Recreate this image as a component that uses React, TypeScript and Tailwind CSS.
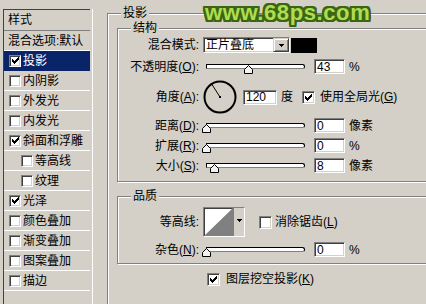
import clsx from "clsx";

// classic win9x bevels
const sunken =
  "border border-t-[#808080] border-l-[#808080] border-b-white border-r-white shadow-[inset_1px_1px_0_#404040,inset_-1px_-1px_0_#d4d0c8]";
const raised =
  "border border-t-[#d4d0c8] border-l-[#d4d0c8] border-b-[#404040] border-r-[#404040] shadow-[inset_1px_1px_0_#fff,inset_-1px_-1px_0_#808080]";
const etched = "border border-[#808080] shadow-[inset_1px_1px_0_#fff,1px_1px_0_#fff]";

const checkPixels = [
  [6, 0, 1],
  [5, 1, 2],
  [0, 2, 1],
  [4, 2, 3],
  [0, 3, 2],
  [3, 3, 3],
  [0, 4, 5],
  [1, 5, 3],
  [2, 6, 1],
];

function CheckMark() {
  return (
    <svg width="7" height="7" viewBox="0 0 7 7" shapeRendering="crispEdges">
      {checkPixels.map(([x, y, w]) => (
        <rect key={`${x}-${y}`} x={x} y={y} width={w} height={1} fill="#000" />
      ))}
    </svg>
  );
}

function Box({ checked, small, className }: { checked?: boolean; small?: boolean; className?: string }) {
  return (
    <span
      className={clsx(
        "flex shrink-0 items-center justify-center bg-white",
        sunken,
        small ? "h-[12px] w-[12px]" : "h-[13px] w-[13px]",
        className
      )}
    >
      {checked && <CheckMark />}
    </span>
  );
}

function Field({ value, className }: { value: string; className?: string }) {
  return (
    <div className={clsx(sunken, "flex h-[15px] shrink-0 items-center bg-white pl-[2px]", className)}>
      {value}
    </div>
  );
}

function Slider({ thumb }: { thumb: string }) {
  return (
    <div className="relative h-[15px] w-[104px] shrink-0">
      <div className="absolute left-[3px] top-[5px] h-[5px] w-[99px] rounded-r-[3px] border border-black border-b-[#808080] bg-white" />
      <svg className={clsx("absolute top-[6px]", thumb)} width="9" height="9" viewBox="0 0 9 9">
        <path d="M0.5 8.5V4.5L4.5 0.5L8.5 4.5V8.5Z" fill="#f2f2f2" stroke="#000" />
      </svg>
    </div>
  );
}

function Arrow() {
  return (
    <svg width="5" height="3" viewBox="0 0 5 3" shapeRendering="crispEdges">
      <path d="M0 0H5L2.5 3Z" fill="#000" />
    </svg>
  );
}

function Row({ label, className, children }: { label: React.ReactNode; className?: string; children: React.ReactNode }) {
  return (
    <div className={clsx("flex items-center", className)}>
      <div className="w-[81px] shrink-0 text-right">{label}</div>
      <div className="ml-[4px] flex items-center">{children}</div>
    </div>
  );
}

function Dial() {
  return (
    <svg width="34" height="34" viewBox="0 0 34 34" className="shrink-0">
      <circle cx="17" cy="17" r="15.5" fill="none" stroke="#000" strokeWidth="2" />
      <line x1="17" y1="17" x2="8" y2="3" stroke="#000" strokeWidth="1" />
      <rect x="16" y="16" width="2" height="2" fill="#000" />
    </svg>
  );
}

const styles = [
  { label: "投影", checked: true, selected: true },
  { label: "内阴影" },
  { label: "外发光" },
  { label: "内发光" },
  { label: "斜面和浮雕", checked: true },
  { label: "等高线", sub: true },
  { label: "纹理", sub: true },
  { label: "光泽", checked: true },
  { label: "颜色叠加" },
  { label: "渐变叠加" },
  { label: "图案叠加" },
  { label: "描边" },
];

function StyleList() {
  return (
    <div className="mt-[9px] flex h-[300px] w-[87px] shrink-0 flex-col border-l border-t border-[#404040] border-r-black">
      <div className="flex h-[21px] items-center border-b border-[#808080] pl-[4px]">样式</div>
      <div className="flex h-[20px] items-center border-b border-white pl-[4px]">混合选项:默认</div>
      {styles.map((s) => (
        <div
          key={s.label}
          className={clsx(
            "flex h-[20px] items-center border-b",
            s.selected ? "border-[#0a246a] bg-[#0a246a] text-white" : "border-white",
            s.sub ? "pl-[17px]" : "pl-[5px]"
          )}
        >
          <Box small checked={s.checked} />
          <span className="ml-[2px]">{s.label}</span>
        </div>
      ))}
    </div>
  );
}

export default function App() {
  return (
    <div className="relative flex h-[304px] w-[426px] items-start overflow-hidden bg-[#d4d0c8] pl-[3px] font-['Liberation_Sans','Noto_Sans_CJK_SC',sans-serif] text-[12px] leading-[14px] text-black">
      <StyleList />
      <div className="ml-[2px] mt-[9px] h-[295px] w-px shrink-0 bg-white" />

      <fieldset className={clsx(etched, "ml-[14px] mt-[6px] min-h-[320px] w-[340px] shrink-0")}>
        <legend className="ml-[13px] bg-[#d4d0c8] px-[2px]">投影</legend>

        <fieldset className={clsx(etched, "ml-[9px] mt-[1px] w-[320px] pb-[8px]")}>
          <legend className="ml-[13px] bg-[#d4d0c8] px-[2px]">结构</legend>

          <Row className="mt-[2px] h-[16px]" label="混合模式:">
            <div className={clsx(sunken, "flex h-[16px] w-[87px] items-center bg-white pl-[2px]")}>
              <span className="flex-1">正片叠底</span>
              <span className={clsx(raised, "flex h-[14px] w-[16px] items-center justify-center bg-[#d4d0c8]")}>
                <Arrow />
              </span>
            </div>
            <div className="ml-px h-[15px] w-[26px] bg-black" />
          </Row>

          <Row className="mt-[6px] h-[15px]" label={<>不透明度(<u>O</u>):</>}>
            <Slider thumb="left-[41px]" />
            <Field value="43" className="ml-[7px] w-[31px]" />
            <span className="ml-[4px]">%</span>
          </Row>

          <Row className="mt-[6px] h-[34px]" label={<>角度(<u>A</u>):</>}>
            <Dial />
            <Field value="120" className="ml-[6px] w-[34px]" />
            <span className="ml-[4px]">度</span>
            <Box checked className="ml-[9px]" />
            <span className="ml-[5px]">
              使用全局光(<u>G</u>)
            </span>
          </Row>

          <Row className="mt-[4px] h-[15px]" label={<>距离(<u>D</u>):</>}>
            <Slider thumb="left-[-1px]" />
            <Field value="0" className="ml-[7px] w-[31px]" />
            <span className="ml-[4px]">像素</span>
          </Row>

          <Row className="mt-[5px] h-[15px]" label={<>扩展(<u>R</u>):</>}>
            <Slider thumb="left-[-1px]" />
            <Field value="0" className="ml-[7px] w-[31px]" />
            <span className="ml-[4px]">%</span>
          </Row>

          <Row className="mt-[5px] h-[15px]" label={<>大小(<u>S</u>):</>}>
            <Slider thumb="left-[7px]" />
            <Field value="8" className="ml-[7px] w-[31px]" />
            <span className="ml-[4px]">像素</span>
          </Row>
        </fieldset>

        <fieldset className={clsx(etched, "ml-[9px] mt-[7px] w-[320px] pb-[6px]")}>
          <legend className="ml-[13px] bg-[#d4d0c8] px-[2px]">品质</legend>

          <Row className="mt-[4px] h-[30px]" label="等高线:">
            <div className={clsx(sunken, "flex h-[30px] w-[42px] shrink-0 bg-white")}>
              <svg width="29" height="28" viewBox="0 0 29 28" className="shrink-0">
                <polygon points="0,28 29,0 29,28" fill="#808080" />
              </svg>
              <div className="flex flex-1 justify-center border-l border-[#808080] bg-[#d4d0c8] pt-[11px]">
                <Arrow />
              </div>
            </div>
            <Box className="ml-[14px]" />
            <span className="ml-[3px]">
              消除锯齿(<u>L</u>)
            </span>
          </Row>

          <Row className="mt-[5px] h-[15px]" label={<>杂色(<u>N</u>):</>}>
            <Slider thumb="left-[-1px]" />
            <Field value="0" className="ml-[7px] w-[31px]" />
            <span className="ml-[4px]">%</span>
          </Row>
        </fieldset>

        <div className="ml-[99px] mt-[8px] flex items-center">
          <Box checked />
          <span className="ml-[6px]">
            图层挖空投影(<u>K</u>)
          </span>
        </div>
      </fieldset>

      {/* watermark */}
      <div className="pointer-events-none absolute left-[205px] top-[2px] font-['Liberation_Sans',sans-serif] text-[22px] font-bold leading-none tracking-[0.6px] text-[#afdc50] [text-shadow:2px_0_#3a6614,-2px_0_#3a6614,0_2px_#3a6614,0_-2px_#3a6614,2px_2px_#3a6614,-2px_-2px_#3a6614,2px_-2px_#3a6614,-2px_2px_#3a6614,1px_2px_#3a6614,-1px_2px_#3a6614,1px_-2px_#3a6614,-1px_-2px_#3a6614,2px_1px_#3a6614,-2px_1px_#3a6614,2px_-1px_#3a6614,-2px_-1px_#3a6614]">
        www.68ps.com
      </div>
    </div>
  );
}
